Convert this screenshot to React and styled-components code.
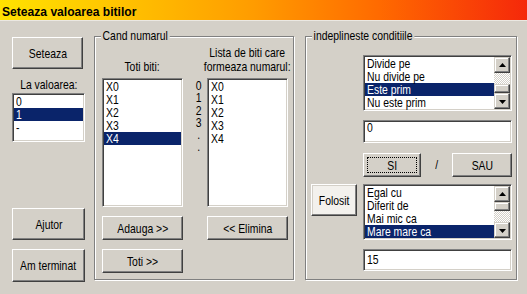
import React from 'react';
import styled, { createGlobalStyle, css } from 'styled-components';

const FONT = `"Liberation Sans", Arial, sans-serif`;

const Global = createGlobalStyle`
  html, body { margin: 0; padding: 0; background: #d4d0c8; }
  body { font-family: ${FONT}; font-size: 13px; color: #000; }
  * { box-sizing: border-box; }
  button { font: inherit; }
`;

const raised = css`
  border: 1px solid;
  border-color: #fff #404040 #404040 #fff;
  box-shadow: inset -1px -1px 0 #808080, inset 1px 1px 0 #d4d0c8;
`;

const raisedScroll = css`
  border: 1px solid;
  border-color: #d4d0c8 #404040 #404040 #d4d0c8;
  box-shadow: inset -1px -1px 0 #808080, inset 1px 1px 0 #fff;
`;

const sunken = css`
  border: 1px solid;
  border-color: #808080 #fff #fff #808080;
  box-shadow: inset 1px 1px 0 #404040, inset -1px -1px 0 #d4d0c8;
  padding: 1px;
`;

/* Narrow text: the dialog uses a condensed face, which is not installed */
const Txt = styled.span`
  display: inline-block;
  white-space: nowrap;
  transform: scaleX(${(p) => p.$sx || 0.8});
  transform-origin: ${(p) => p.$o || 'center'};
`;

const Window = styled.div`
  width: 527px;
  height: 294px;
  background: #d4d0c8;
  display: flex;
  flex-direction: column;
  overflow: hidden;
`;

const TitleBar = styled.div`
  height: 21px;
  flex: none;
  padding: 3px 0 0 2px;
  line-height: 17px;
  font-size: 13px;
  font-weight: bold;
  color: #000;
  white-space: nowrap;
  border-bottom: 1px solid #ebe8e2;
  background: linear-gradient(90deg, #ffe200 0%, #ffc400 22%, #ff9c00 48%, #ff6a00 72%, #f5280a 100%);
`;

const Body = styled.div`
  flex: 1;
  display: flex;
  align-items: flex-start;
  padding: 15px 10px 0 12px;
`;

const LeftColumn = styled.div`
  width: 73px;
  padding-top: 1px;
  display: flex;
  flex-direction: column;
  align-items: flex-start;
`;

const Button = styled.button`
  ${raised};
  background: ${(p) => (p.$light ? '#f3f1ed' : '#d4d0c8')};
  font-size: 13px;
  color: #000;
  margin: ${(p) => p.$mt || 0}px 0 0 0;
  padding: 0;
  width: ${(p) => (p.$w ? `${p.$w}px` : '100%')};
  height: ${(p) => p.$h}px;
  display: flex;
  align-items: center;
  justify-content: center;
  position: relative;
  white-space: nowrap;
  cursor: default;
  ${(p) =>
    p.$focus &&
    css`
      &::after {
        content: '';
        position: absolute;
        inset: 3px;
        border: 1px dotted #000;
      }
    `}
`;

const Caption = styled.div`
  width: 100%;
  display: flex;
  justify-content: center;
  line-height: 14px;
  margin-top: ${(p) => p.$mt || 0}px;
`;

const ListBox = styled.div`
  ${sunken};
  background: #fff;
  width: ${(p) => (p.$w ? `${p.$w}px` : '100%')};
  height: ${(p) => p.$h}px;
  margin-top: ${(p) => p.$mt || 0}px;
  display: flex;
  overflow: hidden;
`;

const Items = styled.div`
  flex: 1;
  min-width: 0;
`;

const Item = styled.div`
  height: 13px;
  line-height: 13px;
  padding-left: 2px;
  white-space: nowrap;
  background: ${(p) => (p.$sel ? '#0a246a' : 'transparent')};
  color: ${(p) => (p.$sel ? '#fff' : '#000')};
`;

const ScrollBar = styled.div`
  width: 16px;
  flex: none;
  display: flex;
  flex-direction: column;
`;

const ScrollButton = styled.div`
  ${raisedScroll};
  background: #d4d0c8;
  height: 16px;
  flex: none;
  display: flex;
  align-items: center;
  justify-content: center;
`;

const Thumb = styled.div`
  ${raisedScroll};
  background: #d4d0c8;
  height: ${(p) => p.$h}px;
  flex: none;
`;

const Track = styled.div`
  height: ${(p) => p.$h}px;
  flex: none;
  background: repeating-conic-gradient(#fff 0 25%, #d4d0c8 0 50%) 0 0 / 2px 2px;
`;

const Arrow = ({ down }) => (
  <svg width="7" height="4" viewBox="0 0 7 4" style={{ display: 'block', marginTop: down ? 1 : -1 }}>
    <polygon points={down ? '0,0 7,0 3.5,4' : '0,4 7,4 3.5,0'} fill="#000" />
  </svg>
);

const Group = styled.div`
  position: relative;
  width: ${(p) => p.$w}px;
  height: 244px;
  margin-left: ${(p) => p.$ml}px;
  border: 1px solid #808080;
  box-shadow: inset 1px 1px 0 #fff, 1px 1px 0 #fff;
`;

const Legend = styled.div`
  position: absolute;
  top: -8px;
  left: 6px;
  padding: 0 2px;
  line-height: 14px;
  background: #d4d0c8;
  white-space: nowrap;
  transform: scaleX(0.8);
  transform-origin: left center;
`;

const BitsGrid = styled.div`
  display: grid;
  grid-template-columns: 81px 24px 81px;
  grid-template-rows: 41px 129px auto auto;
  padding-left: 7px;
`;

const Header = styled.div`
  grid-column: ${(p) => p.$col};
  display: flex;
  align-items: flex-end;
  justify-content: center;
  text-align: center;
  line-height: 14px;
  padding-bottom: 4px;
`;

const Numbers = styled.div`
  grid-column: 2;
  padding: 2px 0 0 7px;
  text-align: center;
  line-height: 12.3px;
`;

const Cell = styled.div`
  grid-column: ${(p) => p.$col};
  margin-top: ${(p) => p.$mt || 0}px;
`;

const CondGrid = styled.div`
  display: grid;
  grid-template-columns: 46px 149px;
  column-gap: 6px;
  padding: 18px 5px 0 5px;
  align-items: start;
`;

const Field = styled.div`
  ${sunken};
  background: #fff;
  height: ${(p) => p.$h}px;
  padding: 0 3px;
  display: flex;
  align-items: ${(p) => (p.$center ? 'center' : 'flex-start')};
  line-height: 14px;
`;

const ButtonRow = styled.div`
  display: flex;
  align-items: center;
  justify-content: space-between;
`;

const Slash = styled.span`
  line-height: 14px;
`;

function List({ items, sel, h, w, mt, scroll }) {
  return (
    <ListBox $h={h} $w={w} $mt={mt}>
      <Items>
        {items.map((t, i) => (
          <Item key={i} $sel={i === sel}>
            <Txt $o="left center">{t}</Txt>
          </Item>
        ))}
      </Items>
      {scroll && (
        <ScrollBar>
          <ScrollButton>
            <Arrow />
          </ScrollButton>
          {scroll.map((s, i) =>
            s.t === 'thumb' ? <Thumb key={i} $h={s.h} /> : <Track key={i} $h={s.h} />
          )}
          <ScrollButton>
            <Arrow down />
          </ScrollButton>
        </ScrollBar>
      )}
    </ListBox>
  );
}

export default function App() {
  return (
    <>
      <Global />
      <Window>
        <TitleBar>
          <Txt $sx={0.93} $o="left center">Seteaza valoarea bitilor</Txt>
        </TitleBar>
        <Body>
          <LeftColumn>
            <Button $w={71} $h={32}><Txt>Seteaza</Txt></Button>
            <Caption $mt={9}><Txt>La valoarea:</Txt></Caption>
            <List items={['0', '1', '-']} sel={1} h={49} mt={1} />
            <Button $h={32} $mt={66}><Txt>Ajutor</Txt></Button>
            <Button $h={33} $mt={9}><Txt>Am terminat</Txt></Button>
          </LeftColumn>

          <Group $w={200} $ml={9}>
            <Legend>Cand numarul</Legend>
            <BitsGrid>
              <Header $col={1}><Txt>Toti biti:</Txt></Header>
              <Header $col={3}>
                <Txt>
                  Lista de biti care
                  <br />
                  formeaza numarul:
                </Txt>
              </Header>
              <Cell $col={1}>
                <List items={['X0', 'X1', 'X2', 'X3', 'X4']} sel={4} h={129} />
              </Cell>
              <Numbers>
                <Txt>
                  0<br />1<br />2<br />3<br />.<br />.
                </Txt>
              </Numbers>
              <Cell $col={3}>
                <List items={['X0', 'X1', 'X2', 'X3', 'X4']} sel={-1} h={129} />
              </Cell>
              <Cell $col={1} $mt={9}>
                <Button $h={24}><Txt>Adauga &gt;&gt;</Txt></Button>
              </Cell>
              <Cell $col={3} $mt={9}>
                <Button $h={24}><Txt>&lt;&lt; Elimina</Txt></Button>
              </Cell>
              <Cell $col={1} $mt={9}>
                <Button $h={24}><Txt>Toti &gt;&gt;</Txt></Button>
              </Cell>
            </BitsGrid>
          </Group>

          <Group $w={212} $ml={11}>
            <Legend>indeplineste conditiile</Legend>
            <CondGrid>
              <Cell $col={2}>
                <List
                  items={['Divide pe', 'Nu divide pe', 'Este prim', 'Nu este prim']}
                  sel={2}
                  h={56}
                  scroll={[
                    { t: 'track', h: 11 },
                    { t: 'thumb', h: 9 },
                  ]}
                />
              </Cell>
              <Cell $col={2} $mt={9}>
                <Field $h={23}><Txt $o="left center">0</Txt></Field>
              </Cell>
              <Cell $col={2} $mt={10}>
                <ButtonRow>
                  <Button $w={58} $h={24} $focus><Txt>SI</Txt></Button>
                  <Slash><Txt>/</Txt></Slash>
                  <Button $w={60} $h={24}><Txt>SAU</Txt></Button>
                </ButtonRow>
              </Cell>
              <Cell $col={1} $mt={7}>
                <Button $h={32} $light><Txt>Folosit</Txt></Button>
              </Cell>
              <Cell $col={2} $mt={7}>
                <List
                  items={['Egal cu', 'Diferit de', 'Mai mic ca', 'Mare mare ca']}
                  sel={3}
                  h={56}
                  scroll={[
                    { t: 'thumb', h: 9 },
                    { t: 'track', h: 11 },
                  ]}
                />
              </Cell>
              <Cell $col={2} $mt={9}>
                <Field $h={22} $center><Txt $o="left center">15</Txt></Field>
              </Cell>
            </CondGrid>
          </Group>
        </Body>
      </Window>
    </>
  );
}
